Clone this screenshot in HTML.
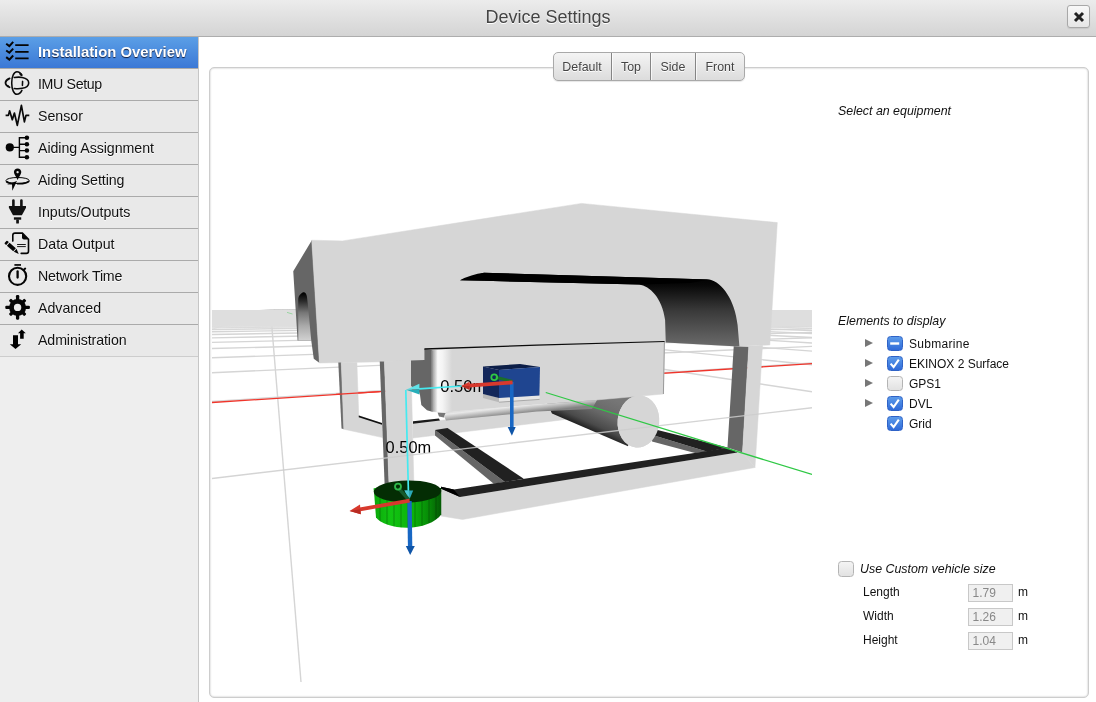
<!DOCTYPE html>
<html>
<head>
<meta charset="utf-8">
<title>Device Settings</title>
<style>
html,body{margin:0;padding:0;}
body{width:1096px;height:702px;overflow:hidden;background:#fff;font-family:"Liberation Sans",Arial,sans-serif;color:#111;position:relative;}
#root{position:absolute;left:0;top:0;width:1096px;height:702px;will-change:transform;}
#hdr{position:absolute;left:0;top:0;width:1096px;height:36px;background:linear-gradient(#ececec,#d4d4d4);border-bottom:1px solid #adadad;}
#hdr h1{margin:0;position:absolute;left:0;width:1096px;top:7px;text-align:center;font-size:18px;font-weight:normal;color:#444;text-shadow:0 1px 0 #fff;line-height:21px;}
#close{position:absolute;left:1067px;top:5px;width:21px;height:21px;border:1px solid #a8a8a8;border-radius:3px;background:linear-gradient(#f8f8f8,#e6e6e6);box-shadow:0 1px 1px rgba(0,0,0,.08);}
#close svg{position:absolute;left:5px;top:5px;}
#side{position:absolute;left:0;top:37px;width:198px;height:665px;background:#eeeeee;border-right:1px solid #c6c6c6;}
#side li:last-child{border-bottom-color:#cdcdcd;}
#side ul{list-style:none;margin:0;padding:0;}
#side li{height:31px;border-bottom:1px solid #aaa;background:#e9e9e9;position:relative;font-size:14.2px;line-height:31px;color:#111;text-shadow:0 1px 0 #fff;}
#side li span{position:absolute;left:38px;top:0;white-space:nowrap;}
#side li.sel{background:linear-gradient(#5b9fe6,#3b78d6);color:#fff;font-weight:bold;font-size:14.85px;line-height:31px;text-shadow:0 1px 1px rgba(0,0,20,.8);border-bottom-color:#aaa;}
#side li svg{position:absolute;left:0;top:0;}
#panel{position:absolute;left:209px;top:67px;width:878px;height:629px;border:1px solid #cdcdcd;border-radius:5px;background:#fff;box-shadow:inset 0 0 2px rgba(0,0,0,.3);}
#views{position:absolute;left:553px;top:52px;height:27px;display:flex;border:1px solid #a9a9a9;border-radius:5px;background:linear-gradient(#f4f4f4,#dcdcdc);box-shadow:0 1px 1px rgba(0,0,0,.10);font-size:12.4px;color:#444;text-shadow:0 1px 0 #fff;overflow:hidden;}
#views div{line-height:29.2px;text-align:center;border-right:1px solid #858585;box-sizing:border-box;box-shadow:inset 1px 0 0 rgba(255,255,255,.7);}
#views div:first-child{padding-right:1px;box-shadow:none;}
#views div:last-child{border-right:0;}
#scene{position:absolute;left:212px;top:82px;}
.it{font-style:italic;font-size:12.4px;position:absolute;white-space:nowrap;color:#111;}
.lb{font-size:12px;position:absolute;white-space:nowrap;color:#111;}
.cb{position:absolute;width:15.5px;height:15px;border-radius:3.5px;box-sizing:border-box;}
.cb.off{border:1px solid #b4b4b4;background:linear-gradient(#f4f4f4,#e2e2e2);}
.cb.on{background:linear-gradient(#5c9bea,#2f6ad8);border:1px solid #2f63c7;}
.cb svg{position:absolute;left:-1px;top:-1px;}
.tri{position:absolute;width:0;height:0;border-left:8px solid #777;border-top:4.5px solid transparent;border-bottom:4.5px solid transparent;}
.inp{position:absolute;left:968px;width:43px;height:16px;border:1px solid #c8c8c8;background:#f0f0f0;font-size:12px;color:#888;line-height:17px;text-indent:3.5px;}
</style>
</head>
<body>
<div id="root">
<div id="hdr"><h1>Device Settings</h1>
<div id="close"><svg width="12" height="12" viewBox="0 0 12 12"><path d="M2 2 L10 10 M10 2 L2 10" stroke="#222" stroke-width="3" stroke-linecap="butt"/></svg></div>
</div>
<div id="side"><ul>
<li class="sel"><svg width="36" height="31" viewBox="0 0 36 31"><g fill="none" stroke="#050505" stroke-width="2"><path d="M6.2 6.8 L9.35 9.1 L13.2 4.8 M6.2 13.5 L9.35 15.7 L13.2 11.6 M6.2 20.1 L9.35 22.6 L13.2 18.5"/><path d="M15.2 8.2 H28.6 M15.2 14.8 H28.6 M15.2 21.4 H28.6" stroke-width="1.7"/></g></svg><span>Installation Overview</span></li>
<li><svg width="36" height="31" viewBox="0 0 36 31"><g fill="none" stroke="#0a0a0a" stroke-width="1.55" stroke-linecap="round"><path d="M21.6 6.2 C20.6 3.7 18.7 2.7 16.9 2.7 C14 2.7 11.7 7.6 11.7 14 C11.7 20.4 14 25.3 16.9 25.3 C18.8 25.3 20.7 23.8 21.9 21.4"/><path d="M14.3 8.5 C17 8.1 20 8 22.3 8.5 C26.4 9.4 28.7 11.6 28.7 13.9 C28.7 16.2 26.4 18.5 22.3 19.3 C20 19.8 17 19.8 14.3 19.5"/><path d="M9.6 9.4 C7 10.6 5.5 12 5.5 13.7 C5.5 15.4 7 17 9.6 18.2" stroke-width="1.8"/><path d="M22.6 12.4 L22.4 16.4"/><path d="M20.4 4.9 L21.5 6" stroke-width="2.2"/><circle cx="8" cy="17.2" r="1" fill="#0a0a0a" stroke="none"/></g></svg><span style="letter-spacing:-0.35px">IMU Setup</span></li>
<li><svg width="36" height="31" viewBox="0 0 36 31"><path d="M5.6 14.4 H8.4 L9.6 9.8 L12.3 18.8 L14.4 12 L17.3 24.3 L21.4 4.4 L24.4 20.8 L26 14.4 H29.3" fill="none" stroke="#0a0a0a" stroke-width="1.7" stroke-linejoin="round" stroke-linecap="butt"/></svg><span>Sensor</span></li>
<li><svg width="36" height="31" viewBox="0 0 36 31"><g fill="#050505" stroke="none"><circle cx="9.8" cy="14.4" r="4.1"/><circle cx="26.9" cy="4.7" r="2.25"/><circle cx="26.9" cy="11.2" r="2.25"/><circle cx="26.9" cy="17.6" r="2.25"/><circle cx="26.9" cy="24.2" r="2.25"/></g><path d="M13 14.4 H19.4 M26.9 4.7 H19.4 V24.2 H26.9 M19.4 11.2 H26.9 M19.4 17.6 H26.9" fill="none" stroke="#050505" stroke-width="1.4"/></svg><span style="letter-spacing:-0.05px">Aiding Assignment</span></li>
<li><svg width="36" height="31" viewBox="0 0 36 31"><path d="M17.6 3.4 C15.5 3.4 13.9 5 13.9 7.1 C13.9 9.6 16.4 12 17.6 14.9 C18.8 12 21.3 9.6 21.3 7.1 C21.3 5 19.7 3.4 17.6 3.4 Z M17.6 5.9 A1.15 1.15 0 1 1 17.59 5.9 Z" fill="#050505" fill-rule="evenodd"/><ellipse cx="17.6" cy="15.5" rx="11.6" ry="3" fill="none" stroke="#050505" stroke-width="1"/><path d="M6.2 16.2 C7.5 18 11 18.6 14 18.7 M17 18.7 C22 18.8 28 17.8 29.1 16" fill="none" stroke="#050505" stroke-width="1.8"/><path d="M6.9 19.6 L17 16 L12.3 25.8 L12 19.2 Z" fill="#050505"/></svg><span style="letter-spacing:-0.09px">Aiding Setting</span></li>
<li><svg width="36" height="31" viewBox="0 0 36 31"><g fill="#111"><rect x="12.1" y="2.3" width="2.6" height="8" rx="1.3"/><rect x="20.1" y="2.3" width="2.6" height="8" rx="1.3"/><path d="M8.9 8.9 H26 V10.7 L21.9 18.2 H13 L8.9 10.7 Z"/><rect x="13.9" y="20.3" width="7.3" height="2.4"/><rect x="16.2" y="22.6" width="2.7" height="3.9" rx="0.5"/></g></svg><span>Inputs/Outputs</span></li>
<li><svg width="36" height="31" viewBox="0 0 36 31"><path d="M12.8 12.1 V6.3 Q12.8 4.1 15 4.1 H22.4 L28.5 10.3 V22.2 Q28.5 24.4 26.3 24.4 H21.2" fill="none" stroke="#050505" stroke-width="1.6" stroke-linecap="round"/><path d="M22 4.1 L28.5 10.6 H24 Q22 10.6 22 8.6 Z" fill="#050505"/><path d="M17.1 15.5 H25.8 M17.1 17.6 H25.8" stroke="#050505" stroke-width="0.9" fill="none"/><g transform="translate(5.6 12.9) rotate(41.3)" fill="#050505"><path d="M0 -1.2 Q0 -2 0.8 -2 H2.6 V2 H0.8 Q0 2 0 1.2 Z"/><rect x="3.5" y="-2" width="8.4" height="4"/><path d="M12.8 -2 L17.8 0.4 L12.8 2 Z"/></g></svg><span>Data Output</span></li>
<li><svg width="36" height="31" viewBox="0 0 36 31"><circle cx="17.6" cy="15.3" r="8.6" fill="none" stroke="#050505" stroke-width="2.1"/><path d="M14.4 3.95 H21" stroke="#050505" stroke-width="1.7" fill="none"/><path d="M17.6 10.4 V16.6" stroke="#050505" stroke-width="2.3" stroke-linecap="round" fill="none"/><path d="M23.6 9 L25.2 7.6" stroke="#050505" stroke-width="2" stroke-linecap="round" fill="none"/></svg><span style="letter-spacing:-0.22px">Network Time</span></li>
<li><svg width="36" height="31" viewBox="0 0 36 31"><g fill="#050505"><rect x="15.95" y="2.10" width="3.3" height="6.3" rx="1.1" transform="rotate(0 17.6 14.4)"/><rect x="15.95" y="3.40" width="3.3" height="5.0" rx="1.1" transform="rotate(45 17.6 14.4)"/><rect x="15.95" y="2.10" width="3.3" height="6.3" rx="1.1" transform="rotate(90 17.6 14.4)"/><rect x="15.95" y="3.40" width="3.3" height="5.0" rx="1.1" transform="rotate(135 17.6 14.4)"/><rect x="15.95" y="2.10" width="3.3" height="6.3" rx="1.1" transform="rotate(180 17.6 14.4)"/><rect x="15.95" y="3.40" width="3.3" height="5.0" rx="1.1" transform="rotate(225 17.6 14.4)"/><rect x="15.95" y="2.10" width="3.3" height="6.3" rx="1.1" transform="rotate(270 17.6 14.4)"/><rect x="15.95" y="3.40" width="3.3" height="5.0" rx="1.1" transform="rotate(315 17.6 14.4)"/><path d="M17.6 14.4 m-8.5 0 a8.5 8.5 0 1 0 17 0 a8.5 8.5 0 1 0 -17 0 Z M17.6 14.4 m-3.7 0 a3.7 3.7 0 1 1 7.4 0 a3.7 3.7 0 1 1 -7.4 0 Z" fill-rule="evenodd"/></g></svg><span>Advanced</span></li>
<li><svg width="36" height="31" viewBox="0 0 36 31"><g fill="#000"><path d="M13 10.3 H18 V19.2 H21.2 L15.5 24 L9.8 19.2 H13 Z"/><path d="M20.1 13.7 V8.2 H18 L21.7 4.6 L25.8 8.2 H23.7 V13.7 Z"/></g></svg><span style="letter-spacing:-0.1px">Administration</span></li>
</ul></div>
<div id="panel"></div>
<svg id="scene" width="600" height="600" viewBox="212 82 600 600">
<defs>
<linearGradient id="gTun" gradientUnits="userSpaceOnUse" x1="0" y1="276" x2="0" y2="346"><stop offset="0" stop-color="#000"/><stop offset="0.13" stop-color="#080808"/><stop offset="0.5" stop-color="#3a3a3a"/><stop offset="1" stop-color="#6a6a6a"/></linearGradient>
<linearGradient id="gArch" gradientUnits="userSpaceOnUse" x1="0" y1="293" x2="0" y2="340"><stop offset="0" stop-color="#000"/><stop offset="0.17" stop-color="#2a2a2a"/><stop offset="0.42" stop-color="#777"/><stop offset="0.7" stop-color="#aaa"/><stop offset="1" stop-color="#d0d0d0"/></linearGradient>
<linearGradient id="gBoxF" gradientUnits="userSpaceOnUse" x1="431" y1="0" x2="452" y2="0"><stop offset="0" stop-color="#666"/><stop offset="0.1" stop-color="#a8a8a8"/><stop offset="0.32" stop-color="#fafafa"/><stop offset="0.55" stop-color="#f4f4f4"/><stop offset="1" stop-color="#d6d6d6"/></linearGradient>
<linearGradient id="gBand" gradientUnits="userSpaceOnUse" x1="500" y1="405.5" x2="501.2" y2="416"><stop offset="0" stop-color="#d6d6d6"/><stop offset="0.25" stop-color="#e8e8e8"/><stop offset="0.62" stop-color="#b8b8b8"/><stop offset="1" stop-color="#828282"/></linearGradient>
<linearGradient id="gCyl" gradientUnits="userSpaceOnUse" x1="606" y1="396" x2="590" y2="431"><stop offset="0" stop-color="#767676"/><stop offset="0.45" stop-color="#686868"/><stop offset="0.8" stop-color="#4a4a4a"/><stop offset="1" stop-color="#1e1e1e"/></linearGradient>
<linearGradient id="gDvl" gradientUnits="userSpaceOnUse" x1="374" y1="0" x2="441" y2="0"><stop offset="0" stop-color="#0aa80a"/><stop offset="0.25" stop-color="#12c412"/><stop offset="0.6" stop-color="#0bb00b"/><stop offset="0.82" stop-color="#078a07"/><stop offset="1" stop-color="#045a04"/></linearGradient>
<linearGradient id="gHor" gradientUnits="userSpaceOnUse" x1="0" y1="310" x2="0" y2="329"><stop offset="0" stop-color="#dedede"/><stop offset="0.8" stop-color="#dedede"/><stop offset="1" stop-color="#e2e2e2" stop-opacity="0"/></linearGradient>
<clipPath id="cv"><rect x="212" y="82" width="600" height="600"/></clipPath>
</defs>
<g clip-path="url(#cv)">
<g stroke="#d5d5d5" stroke-width="1.4" fill="none">
<line x1="212.0" y1="401.45" x2="812.0" y2="363.03" opacity="1.00"/>
<line x1="212.0" y1="372.75" x2="812.0" y2="346.39" opacity="1.00"/>
<line x1="212.0" y1="357.77" x2="812.0" y2="337.70" opacity="1.00"/>
<line x1="212.0" y1="348.56" x2="812.0" y2="332.36" opacity="1.00"/>
<line x1="212.0" y1="342.33" x2="812.0" y2="328.74" opacity="1.00"/>
<line x1="212.0" y1="337.83" x2="812.0" y2="326.14" opacity="1.00"/>
<line x1="212.0" y1="334.43" x2="812.0" y2="324.16" opacity="1.00"/>
<line x1="212.0" y1="331.77" x2="812.0" y2="322.62" opacity="1.00"/>
<line x1="212.0" y1="329.63" x2="812.0" y2="321.38" opacity="0.96"/>
<line x1="212.0" y1="327.88" x2="812.0" y2="320.37" opacity="0.92"/>
<line x1="212.0" y1="326.41" x2="812.0" y2="319.52" opacity="0.88"/>
<line x1="212.0" y1="325.17" x2="812.0" y2="318.79" opacity="0.84"/>
<line x1="212.0" y1="324.10" x2="812.0" y2="318.17" opacity="0.80"/>
<line x1="212.0" y1="323.17" x2="812.0" y2="317.64" opacity="0.76"/>
<line x1="212.0" y1="322.36" x2="812.0" y2="317.16" opacity="0.72"/>
<line x1="212.0" y1="321.64" x2="812.0" y2="316.75" opacity="0.68"/>
<line x1="212.0" y1="321.00" x2="812.0" y2="316.38" opacity="0.64"/>
<line x1="212.0" y1="320.42" x2="812.0" y2="316.04" opacity="0.60"/>
<line x1="212.0" y1="319.91" x2="812.0" y2="315.74" opacity="0.56"/>
<line x1="212.0" y1="319.44" x2="812.0" y2="315.47" opacity="0.52"/>
<line x1="212.0" y1="319.01" x2="812.0" y2="315.23" opacity="0.48"/>
<line x1="212.0" y1="318.63" x2="812.0" y2="315.00" opacity="0.44"/>
<line x1="212.0" y1="318.27" x2="812.0" y2="314.79" opacity="0.40"/>
<line x1="212.0" y1="317.94" x2="812.0" y2="314.60" opacity="0.36"/>
<line x1="212.0" y1="317.64" x2="812.0" y2="314.43" opacity="0.32"/>
<line x1="212.0" y1="317.36" x2="812.0" y2="314.27" opacity="0.28"/>
<line x1="212.0" y1="317.10" x2="812.0" y2="314.11" opacity="0.25"/>
<line x1="212.0" y1="316.85" x2="812.0" y2="313.97" opacity="0.25"/>
<line x1="212.0" y1="316.63" x2="812.0" y2="313.84" opacity="0.25"/>
<line x1="212.0" y1="316.41" x2="812.0" y2="313.72" opacity="0.25"/>
<line x1="212.0" y1="316.21" x2="812.0" y2="313.60" opacity="0.25"/>
<line x1="212.0" y1="316.03" x2="812.0" y2="313.49" opacity="0.25"/>
<line x1="212.0" y1="315.85" x2="812.0" y2="313.39" opacity="0.25"/>
<line x1="273.0" y1="310.00" x2="812.0" y2="391.83" opacity="1.00"/>
<line x1="273.0" y1="310.00" x2="812.0" y2="364.76" opacity="1.00"/>
<line x1="273.0" y1="310.00" x2="812.0" y2="351.15" opacity="1.00"/>
<line x1="273.0" y1="310.00" x2="812.0" y2="342.96" opacity="1.00"/>
<line x1="273.0" y1="310.00" x2="812.0" y2="337.49" opacity="1.00"/>
<line x1="273.0" y1="310.00" x2="812.0" y2="333.57" opacity="1.00"/>
<line x1="273.0" y1="310.00" x2="812.0" y2="330.64" opacity="1.00"/>
<line x1="273.0" y1="310.00" x2="812.0" y2="328.35" opacity="0.96"/>
<line x1="273.0" y1="310.00" x2="812.0" y2="326.52" opacity="0.92"/>
<line x1="273.0" y1="310.00" x2="812.0" y2="325.02" opacity="0.88"/>
<line x1="273.0" y1="310.00" x2="812.0" y2="323.77" opacity="0.84"/>
<line x1="273.0" y1="310.00" x2="812.0" y2="322.71" opacity="0.80"/>
<line x1="273.0" y1="310.00" x2="812.0" y2="321.81" opacity="0.76"/>
<line x1="273.0" y1="310.00" x2="812.0" y2="321.02" opacity="0.72"/>
<line x1="273.0" y1="310.00" x2="812.0" y2="320.33" opacity="0.68"/>
<line x1="273.0" y1="310.00" x2="812.0" y2="319.73" opacity="0.64"/>
<line x1="273.0" y1="310.00" x2="812.0" y2="319.19" opacity="0.60"/>
<line x1="273.0" y1="310.00" x2="812.0" y2="318.70" opacity="0.56"/>
<line x1="273.0" y1="310.00" x2="812.0" y2="318.27" opacity="0.52"/>
<line x1="273.0" y1="310.00" x2="812.0" y2="317.88" opacity="0.48"/>
<line x1="273.0" y1="310.00" x2="812.0" y2="317.52" opacity="0.44"/>
<line x1="273.0" y1="310.00" x2="812.0" y2="317.19" opacity="0.40"/>
<line x1="273.0" y1="310.00" x2="812.0" y2="316.89" opacity="0.36"/>
<line x1="273.0" y1="310.00" x2="812.0" y2="316.62" opacity="0.32"/>
<line x1="273.0" y1="310.00" x2="812.0" y2="316.36" opacity="0.28"/>
<line x1="273.0" y1="310.00" x2="812.0" y2="316.13" opacity="0.25"/>
<line x1="273.0" y1="310.00" x2="812.0" y2="315.91" opacity="0.25"/>
<line x1="273.0" y1="310.00" x2="812.0" y2="315.70" opacity="0.25"/>
<line x1="273.0" y1="310.00" x2="812.0" y2="315.51" opacity="0.25"/>
<line x1="271.8" y1="326" x2="301" y2="682"/>
<line x1="273" y1="310" x2="212" y2="329.18" opacity="0.6"/>
<line x1="273" y1="310" x2="212" y2="319.48" opacity="0.6"/>
<line x1="273" y1="310" x2="212" y2="316.29" opacity="0.6"/>
<line x1="273" y1="310" x2="212" y2="314.71" opacity="0.6"/>
<line x1="273" y1="310" x2="212" y2="313.76" opacity="0.6"/>
<line x1="273" y1="310" x2="212" y2="313.13" opacity="0.6"/>
<line x1="273" y1="310" x2="212" y2="312.69" opacity="0.6"/>
</g>
<rect x="212" y="310" width="600" height="20" fill="url(#gHor)"/>
<line x1="212.00" y1="402.50" x2="812.00" y2="363.63" stroke="#f0352b" stroke-width="1.3"/>
<line x1="287.00" y1="312.40" x2="292.50" y2="314.00" stroke="#35c94a" stroke-width="1" opacity="0.4"/>
<polygon points="312.00,240.00 293.25,271.25 297.60,340.60 311.25,340.60 313.75,358.75 319.60,363.00" fill="#666"/>
<path d="M298.3,340.6 L298.2,299 C298.4,296 300.5,293.5 303,292.3 C305,291.8 306.6,293.5 307,297 L307.7,303 L311.25,340.6 Z" fill="url(#gArch)"/>
<polygon points="311.70,240.20 342.50,240.90 581.50,203.40 777.30,222.60 769.80,345.00 733.75,346.20 665.75,342.50 424.40,349.50 424.40,361.00 319.40,363.00" fill="#d6d6d6" stroke="#d6d6d6" stroke-width="0.5"/>
<path d="M460,280.2 Q471,274.2 484,272.7 L709.5,279.4 C722,282 735,300 737.6,325 L739.4,346.2 L733.75,346.2 L665.75,342.6 L665.1,320 C662,298 650,286 639,284.6 L484,280.8 Z" fill="url(#gTun)"/>
<polygon points="460.00,280.20 484.00,272.70 709.50,279.40 690.00,283.00 639.00,284.60 484.00,280.80" fill="#000"/>
<polygon points="338.30,362.60 341.40,362.60 344.00,429.20 341.50,428.50" fill="#6c6c6c"/>
<polygon points="341.25,362.60 356.90,362.40 358.75,415.60 381.90,423.75 382.60,437.60 343.75,429.20" fill="#d6d6d6" stroke="#d6d6d6" stroke-width="0.5"/>
<polygon points="358.75,415.40 382.00,423.00 382.00,424.80 358.75,417.20" fill="#111"/>
<line x1="336.00" y1="394.47" x2="379.80" y2="391.63" stroke="#f0352b" stroke-width="1.3"/>
<polygon points="379.75,361.60 384.40,361.50 389.00,484.00 384.60,484.00" fill="#666"/>
<polygon points="384.40,361.50 410.80,360.20 413.90,484.00 389.00,484.00" fill="#d6d6d6" stroke="#d6d6d6" stroke-width="0.5"/>
<polygon points="413.00,423.00 444.00,420.00 537.00,411.00 566.00,408.50 566.00,419.40 537.00,423.00 413.00,438.00" fill="#d6d6d6" stroke="#d6d6d6" stroke-width="0.5"/>
<polygon points="413.00,421.30 438.80,418.60 440.00,420.60 413.00,423.80" fill="#1a1a1a"/>
<polygon points="733.75,346.20 748.75,347.00 742.50,452.50 727.50,447.50" fill="#666"/>
<polygon points="748.75,347.00 762.50,345.30 755.00,467.50 742.50,452.50" fill="#d6d6d6" stroke="#d6d6d6" stroke-width="0.5"/>
<polygon points="545.00,399.00 641.00,395.40 628.00,446.20 552.00,413.50" fill="url(#gCyl)"/>
<ellipse cx="638.4" cy="421.5" rx="20.8" ry="26.1" fill="#d6d6d6" transform="rotate(5.5 638.4 421.5)"/>
<polygon points="424.40,349.00 433.00,350.00 433.00,412.00 427.00,410.20 421.30,405.00 420.00,395.00 419.00,392.00 411.00,386.00 411.00,360.60 424.40,360.00" fill="#666"/>
<polygon points="437.60,412.40 446.40,413.00 443.80,417.40 439.00,416.60" fill="#777"/>
<polygon points="432.00,350.20 536.60,345.60 664.60,342.00 663.50,394.00 596.00,400.00 537.00,404.40 444.00,412.20 432.00,411.60" fill="#d6d6d6" stroke="#d6d6d6" stroke-width="0.5"/>
<polygon points="432.00,350.20 453.00,349.30 453.00,411.40 444.00,412.20 432.00,411.60" fill="url(#gBoxF)"/>
<polygon points="446.00,412.00 537.00,404.40 597.00,400.00 592.00,409.00 537.00,411.60 446.00,420.40 444.00,416.50" fill="url(#gBand)"/>
<polygon points="424.40,348.20 536.60,344.60 664.60,340.90 664.60,342.10 536.60,345.80 424.40,349.70" fill="#0c0c0c"/>
<line x1="664.40" y1="342.00" x2="663.40" y2="394.00" stroke="#9a9a9a" stroke-width="1"/>
<text x="440.3" y="391.6" font-family="Liberation Sans, Arial, sans-serif" font-size="16.5" fill="#000" opacity="0.99">0.50m</text>
<polygon points="483.00,394.00 499.00,398.00 499.00,402.20 483.00,398.00" fill="#b9b9b9"/>
<polygon points="499.00,398.00 539.60,395.60 539.60,399.40 499.00,402.20" fill="#e6e6e6"/>
<line x1="499.00" y1="402.20" x2="539.60" y2="399.40" stroke="#a8a8a8" stroke-width="1"/>
<polygon points="483.00,366.50 520.00,364.00 540.00,367.10 499.00,370.00" fill="#0c1e48"/>
<polygon points="483.00,366.50 499.00,370.00 499.00,398.00 483.00,394.00" fill="#13275a"/>
<polygon points="499.00,370.00 540.00,367.10 539.40,395.60 499.00,398.00" fill="#1f4590"/>
<polygon points="435.00,430.00 435.00,435.50 493.75,483.75 505.00,482.00" fill="#666"/>
<polygon points="435.00,430.00 447.50,428.00 523.75,478.75 505.00,482.00" fill="#212121"/>
<polygon points="652.50,435.00 707.50,451.75 695.00,453.00 652.00,441.50" fill="#666"/>
<polygon points="657.50,430.00 727.50,447.50 707.50,451.75 652.50,435.00" fill="#212121"/>
<polygon points="441.00,488.50 460.00,497.00 737.50,452.50 742.50,452.50 755.00,467.50 462.50,519.50 441.00,516.00" fill="#d6d6d6" stroke="#d6d6d6" stroke-width="0.5"/>
<polygon points="441.00,486.80 453.75,489.50 707.50,451.00 727.50,447.50 737.50,452.50 460.00,497.00 441.00,488.60" fill="#212121"/>
<polygon points="441.00,486.80 453.75,489.50 460.00,497.00 441.00,488.80" fill="#000"/>
<ellipse cx="638.4" cy="421.5" rx="20.8" ry="26.1" fill="#d6d6d6" transform="rotate(5.5 638.4 421.5)"/>
<text x="385.6" y="453.2" font-family="Liberation Sans, Arial, sans-serif" font-size="16.4" fill="#000" opacity="0.99">0.50m</text>
<line x1="212.00" y1="478.50" x2="812.00" y2="407.70" stroke="#cdcdcd" stroke-width="1.4" opacity="0.85"/>
<line x1="545.75" y1="392.50" x2="812.00" y2="474.50" stroke="#2fc845" stroke-width="1.3"/>
<clipPath id="cDvl"><path d="M373.75,488.6 L376,517.4 C380,523 393,527.7 407,527.7 C421,527.7 436,522.2 441.25,514.4 L441.25,488 Z"/></clipPath>
<path d="M373.75,488.6 L376,517.4 C380,523 393,527.7 407,527.7 C421,527.7 436,522.2 441.25,514.4 L441.25,488 Z" fill="url(#gDvl)"/>
<g clip-path="url(#cDvl)" stroke="#000" stroke-opacity="0.13" stroke-width="2">
<line x1="380" y1="490" x2="380" y2="530"/>
<line x1="387" y1="490" x2="387" y2="530"/>
<line x1="394" y1="490" x2="394" y2="530"/>
<line x1="401" y1="490" x2="401" y2="530"/>
<line x1="408" y1="490" x2="408" y2="530"/>
<line x1="415" y1="490" x2="415" y2="530"/>
<line x1="422" y1="490" x2="422" y2="530"/>
<line x1="429" y1="490" x2="429" y2="530"/>
<line x1="436" y1="490" x2="436" y2="530"/>
</g>
<polygon points="373.60,488.40 377.40,487.40 377.60,493.60 374.20,493.40" fill="#19c719"/>
<ellipse cx="407.5" cy="491.4" rx="33.8" ry="11" fill="#042d04" transform="rotate(-0.8 407.5 491.4)"/>
<line x1="405.80" y1="390.00" x2="408.40" y2="491.00" stroke="#45eaf0" stroke-width="1.7"/>
<line x1="419.00" y1="388.80" x2="462.00" y2="386.00" stroke="#45eaf0" stroke-width="1.7"/>
<polygon points="406.00,389.75 419.40,383.75 419.40,389.20" fill="#62e2e8"/>
<polygon points="406.00,389.75 419.40,389.20 419.40,394.40" fill="#27aeb9"/>
<polygon points="404.40,490.40 413.20,490.40 409.40,499.40" fill="#2ca9b8"/>
<polygon points="404.40,490.40 408.80,490.40 409.40,499.40" fill="#4cc8d2"/>
<line x1="512.50" y1="381.40" x2="495.40" y2="377.30" stroke="#1a6e2a" stroke-width="3.0"/>
<circle cx="494.2" cy="377.3" r="2.9" fill="none" stroke="#2fc845" stroke-width="1.8"/>
<line x1="511.80" y1="382.00" x2="511.80" y2="427.50" stroke="#1867c4" stroke-width="3.6"/>
<polygon points="507.70,427.00 515.70,427.00 511.90,435.70" fill="#0f55a8"/>
<line x1="512.60" y1="382.40" x2="469.00" y2="385.70" stroke="#d8392d" stroke-width="3.8"/>
<polygon points="461.00,386.00 469.60,381.80 469.60,389.80" fill="#d8392d"/>
<polygon points="461.00,386.00 469.60,386.00 469.60,389.80" fill="#b82b22"/>
<line x1="409.00" y1="500.00" x2="398.60" y2="488.40" stroke="#175a2c" stroke-width="3.4"/>
<circle cx="398" cy="486.6" r="3" fill="none" stroke="#2fb84a" stroke-width="1.8"/>
<line x1="409.50" y1="501.00" x2="410.10" y2="546.50" stroke="#1867c4" stroke-width="4.4"/>
<polygon points="405.80,546.00 414.80,546.00 410.20,555.00" fill="#0f55a8"/>
<line x1="409.60" y1="500.60" x2="360.00" y2="509.30" stroke="#d8392d" stroke-width="3.8"/>
<polygon points="349.60,511.00 360.00,504.40 360.80,514.20" fill="#d8392d"/>
<polygon points="349.60,511.00 360.40,509.30 360.80,514.20" fill="#b82b22"/>
</g>
</svg>
<div id="views"><div style="width:58px">Default</div><div style="width:39px">Top</div><div style="width:45px">Side</div><div style="width:48px">Front</div></div>

<div class="it" style="left:838px;top:103.6px;">Select an equipment</div>
<div class="it" style="left:838px;top:313.6px;">Elements to display</div>

<div class="tri" style="left:865px;top:339px;"></div>
<div class="tri" style="left:865px;top:359px;"></div>
<div class="tri" style="left:865px;top:379px;"></div>
<div class="tri" style="left:865px;top:399px;"></div>

<div class="cb on" style="left:887px;top:336px;"><svg width="16" height="15"><rect x="3.2" y="6.3" width="9" height="2.4" fill="#fff"/></svg></div>
<div class="cb on" style="left:887px;top:356px;"><svg width="16" height="15"><path d="M3.6 7.6 L6.6 11 L11.8 3.6" fill="none" stroke="#fff" stroke-width="2.1"/></svg></div>
<div class="cb off" style="left:887px;top:376px;"></div>
<div class="cb on" style="left:887px;top:396px;"><svg width="16" height="15"><path d="M3.6 7.6 L6.6 11 L11.8 3.6" fill="none" stroke="#fff" stroke-width="2.1"/></svg></div>
<div class="cb on" style="left:887px;top:416px;"><svg width="16" height="15"><path d="M3.6 7.6 L6.6 11 L11.8 3.6" fill="none" stroke="#fff" stroke-width="2.1"/></svg></div>

<div class="lb" style="left:909px;top:337px;letter-spacing:0.3px">Submarine</div>
<div class="lb" style="left:909px;top:357px;">EKINOX 2 Surface</div>
<div class="lb" style="left:909px;top:377px;">GPS1</div>
<div class="lb" style="left:909px;top:397px;">DVL</div>
<div class="lb" style="left:909px;top:417px;">Grid</div>

<div class="cb off" style="left:838px;top:561.4px;width:15.5px;height:15.2px;"></div>
<div class="it" style="left:860px;top:562px;">Use Custom vehicle size</div>
<div class="lb" style="left:863px;top:585px;">Length</div>
<div class="lb" style="left:863px;top:609px;">Width</div>
<div class="lb" style="left:863px;top:633px;">Height</div>
<div class="inp" style="top:584px;">1.79</div>
<div class="inp" style="top:608px;">1.26</div>
<div class="inp" style="top:632px;">1.04</div>
<div class="lb" style="left:1018px;top:585px;">m</div>
<div class="lb" style="left:1018px;top:609px;">m</div>
<div class="lb" style="left:1018px;top:633px;">m</div>
</div>
</body>
</html>
